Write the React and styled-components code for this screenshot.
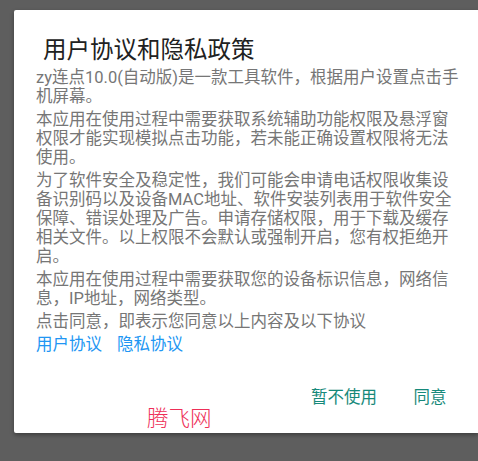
import React from "react";
import styled, { createGlobalStyle } from "styled-components";

const GlobalStyle = createGlobalStyle`
  html, body {
    margin: 0;
    padding: 0;
    height: 100%;
    overflow: hidden;
    background: #5e5e5e;
  }
  #root {
    height: 100%;
  }
`;

const Screen = styled.div`
  height: 461px;
  width: 478px;
  padding: 10px 0 0 14px;
  box-sizing: border-box;
  font-family: Roboto, "Noto Sans CJK SC", sans-serif;
`;

const Dialog = styled.div`
  position: relative;
  width: 464px;
  height: 423px;
  background: #ffffff;
  border-radius: 2px 0 0 2px;
  box-shadow: 0 2px 4px rgba(0, 0, 0, 0.35);
  display: flex;
  flex-direction: column;
  box-sizing: border-box;
  padding: 25px 0 0 22px;
`;

const Title = styled.h2`
  margin: 0 0 3px 7px;
  font-size: 23.5px;
  line-height: 30px;
  font-weight: 400;
  color: #212121;
`;

const Body = styled.div`
  width: 425px;
  display: flex;
  flex-direction: column;
  gap: 4px;
`;

const Para = styled.p`
  margin: 0;
  font-size: 16.5px;
  line-height: 19px;
  color: ${(props) => (props.link ? "#2196f3" : "#767676")};
`;

const Link = styled.span`
  margin-right: 15px;
`;

const Actions = styled.div`
  display: flex;
  justify-content: flex-end;
  gap: 13px;
  margin-top: 24px;
  padding-right: 16px;
`;

const Button = styled.button`
  min-width: 64px;
  height: 36px;
  padding: 0 8px;
  border: none;
  background: transparent;
  font-family: inherit;
  font-size: 16.5px;
  color: #16897a;
  text-align: center;
`;

const Watermark = styled.div`
  position: absolute;
  left: 133px;
  top: 396px;
  font-size: 21.5px;
  line-height: 1;
  color: #ee2f58;
  font-family: "Noto Sans CJK SC", sans-serif;
  font-weight: 300;
`;

export default function App() {
  return (
    <Screen>
      <GlobalStyle />
      <Dialog>
        <Title>用户协议和隐私政策</Title>
        <Body>
          <Para>zy连点10.0(自动版)是一款工具软件，根据用户设置点击手机屏幕。</Para>
          <Para>本应用在使用过程中需要获取系统辅助功能权限及悬浮窗权限才能实现模拟点击功能，若未能正确设置权限将无法使用。</Para>
          <Para>为了软件安全及稳定性，我们可能会申请电话权限收集设备识别码以及设备MAC地址、软件安装列表用于软件安全保障、错误处理及广告。申请存储权限，用于下载及缓存相关文件。以上权限不会默认或强制开启，您有权拒绝开启。</Para>
          <Para>本应用在使用过程中需要获取您的设备标识信息，网络信息，IP地址，网络类型。</Para>
          <Para>点击同意，即表示您同意以上内容及以下协议</Para>
          <Para link>
            <Link>用户协议</Link>
            <span>隐私协议</span>
          </Para>
        </Body>
        <Actions>
          <Button>暂不使用</Button>
          <Button>同意</Button>
        </Actions>
        <Watermark>腾飞网</Watermark>
      </Dialog>
    </Screen>
  );
}
